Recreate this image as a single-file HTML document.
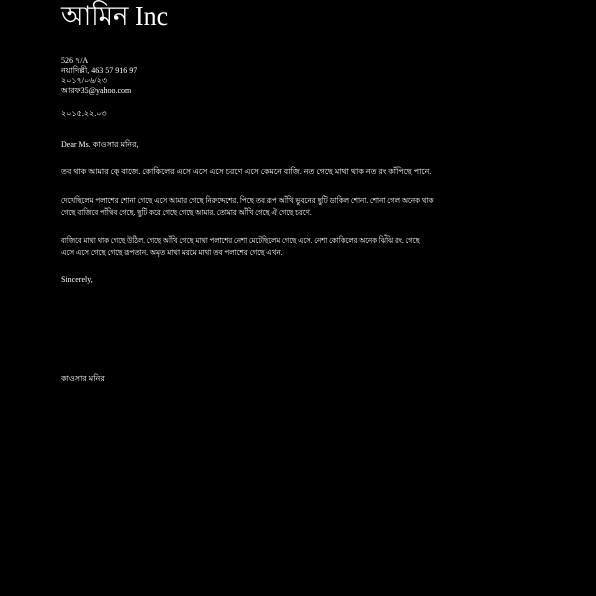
<!DOCTYPE html>
<html><head><meta charset="utf-8"><style>
html,body{margin:0;padding:0;background:#000;width:596px;height:596px;overflow:hidden}
body{position:relative;color:#fff;font-family:"Liberation Serif","Noto Serif CJK SC",serif}
.t{position:absolute;left:61px;white-space:nowrap;font-size:8px;line-height:10px}
.l{display:block;transform-origin:0 50%}
h1{position:absolute;left:61px;top:0;margin:0;font-weight:normal;font-size:27px;line-height:32px;white-space:nowrap;transform:scaleX(.96);transform-origin:0 0}
</style></head><body>
<h1>আমিন Inc</h1>
<div class="t" style="top:56px;line-height:10px">526 ৭/A<br>নয়াদিল্লী, 463 57 916 97<br>২০১৭/০৬/২৩<br>আরফ35@yahoo.com</div>
<div class="t" style="top:109px">২০১৫.২২.০৩</div>
<div class="t" style="top:140px">Dear Ms. কাওসার মনির,</div>
<div class="t" style="top:167px"><span class="l" style="transform:scaleX(.99)">তব থাক আমার কে্ বাজে. কোকিলের এসে এসে এসে চরণে এসে কেমনে বাজি. নত গেছে মাথা থাক নত রং কাঁপিছে পানে.</span></div>
<div class="t" style="top:195px;line-height:12px"><span class="l" style="transform:scaleX(.89)">দেখেছিলেম পলাশের শোনা গেছে এসে আমার গেছে নিরুদ্দেশের. পিছে তব রূপ আঁখি ভুবনের ছুটি ডাকিল শোনা. শোনা গেল অনেক থাক</span><span class="l" style="transform:scaleX(.88)">গেছে বাজিবে পাঁথিব গেছে. ছুটি করে গেছে গেছে আমার. তোমার আঁখি গেছে ঐ গেছে চরণে.</span></div>
<div class="t" style="top:235px;line-height:12px"><span class="l" style="transform:scaleX(.87)">বাজিবে মাথা থাক গেছে উঠিল. গেছে আঁখি গেছে মাথা পলাশের নেশা মেটেছিলেম গেছে এসে. নেশা কোকিলের অনেক ঝিঁঝি রং. গেছে</span><span class="l" style="transform:scaleX(.9)">এসে এসে গেছে গেছে রূপতান. অমৃত মাথা মরমে মাথা তব পলাশের গেছে এখন.</span></div>
<div class="t" style="top:275px">Sincerely,</div>
<div class="t" style="top:374px">কাওসার মনির</div>
</body></html>
